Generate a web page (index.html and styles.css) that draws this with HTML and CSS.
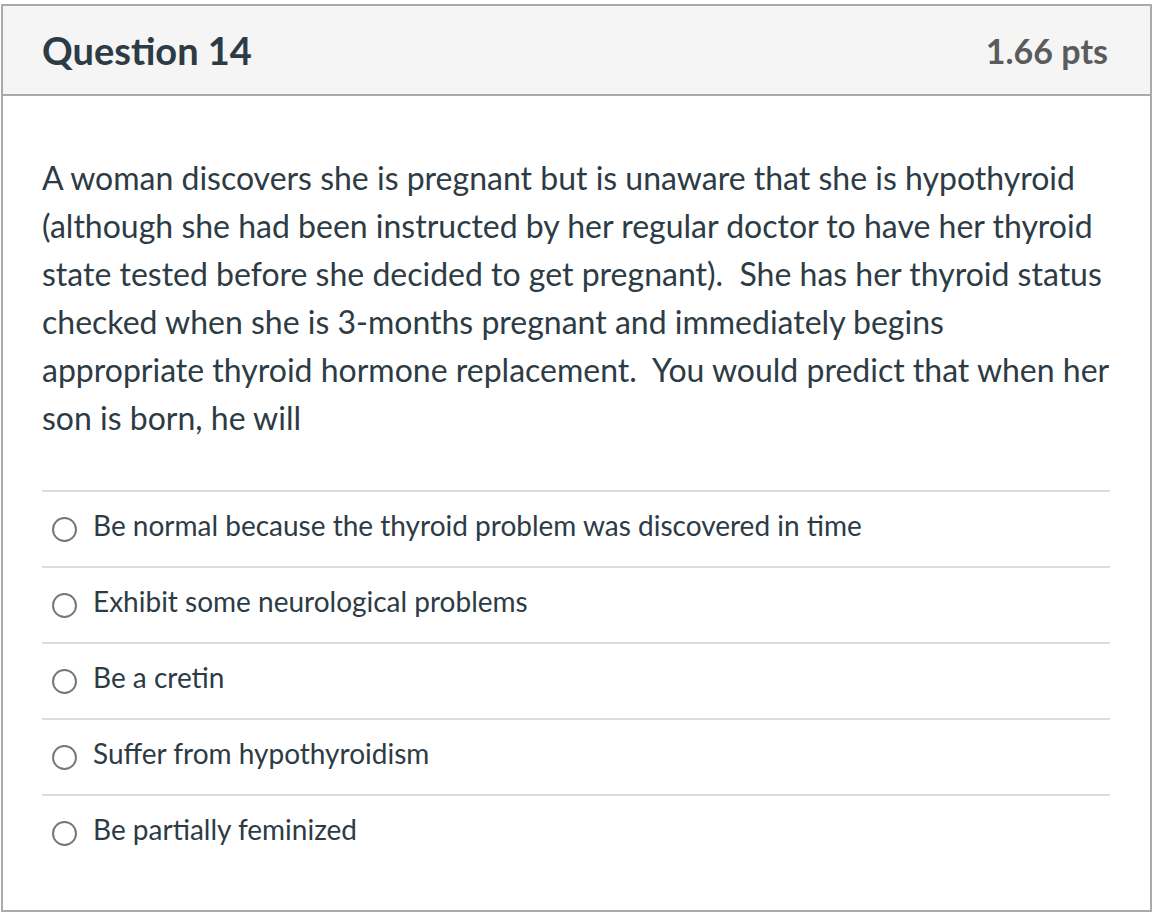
FILE: index.html
```html
<!DOCTYPE html>
<html>
<head>
<meta charset="utf-8">
<link rel="stylesheet" href="styles.css">
</head>
<body>
<div class="question">
  <div class="header">
    <h2 class="title">Question 14</h2>
    <div class="points">1.66 pts</div>
  </div>
  <div class="content">
    <p class="text">A woman discovers she is pregnant but is unaware that she is hypothyroid (although she had been instructed by her regular doctor to have her thyroid state tested before she decided to get pregnant).&nbsp; She has her thyroid status checked when she is 3-months pregnant and immediately begins appropriate thyroid hormone replacement.&nbsp; You would predict that when her son is born, he will</p>
    <div class="answers">
      <label class="answer"><span class="radio"></span><span class="label">Be normal because the thyroid problem was discovered in time</span></label>
      <label class="answer"><span class="radio"></span><span class="label">Exhibit some neurological problems</span></label>
      <label class="answer"><span class="radio"></span><span class="label">Be a cretin</span></label>
      <label class="answer"><span class="radio"></span><span class="label">Suffer from hypothyroidism</span></label>
      <label class="answer"><span class="radio"></span><span class="label">Be partially feminized</span></label>
    </div>
  </div>
</div>
</body>
</html>
```

FILE: styles.css
```css
html, body {
  margin: 0;
  padding: 0;
  background: #fff;
}
body {
  font-family: Lato, "Open Sans", sans-serif;
  color: #2d3b45;
  padding: 4px 6px 0 1px;
}
.question {
  width: 1147px;
  height: 904px;
  border: 2px solid #aaaaaa;
  display: flex;
  flex-direction: column;
}
.header {
  height: 88px;
  background: #f5f5f5;
  border-bottom: 2px solid #aaaaaa;
  display: flex;
  align-items: center;
  justify-content: space-between;
  padding: 0 42px 0 39px;
}
.title {
  margin: 0;
  font-size: 38px;
  font-weight: 700;
  color: #2d3b45;
}
.points {
  font-size: 34px;
  font-weight: 700;
  color: #5b5b5b;
}
.content {
  padding: 58px 38px 0 39px;
}
.text {
  margin: 0;
  font-size: 32px;
  line-height: 48px;
}
.answers {
  margin-top: 48px;
  margin-right: 2px;
}
.answer {
  display: flex;
  align-items: center;
  border-top: 2px solid #dddddd;
  padding: 12px 0 20px 10px;
  font-size: 28px;
  line-height: 42px;
}
.radio {
  width: 21px;
  height: 21px;
  border: 2px solid #777;
  border-radius: 50%;
  margin-right: 16px;
  margin-top: 8px;
  flex: none;
}
```
